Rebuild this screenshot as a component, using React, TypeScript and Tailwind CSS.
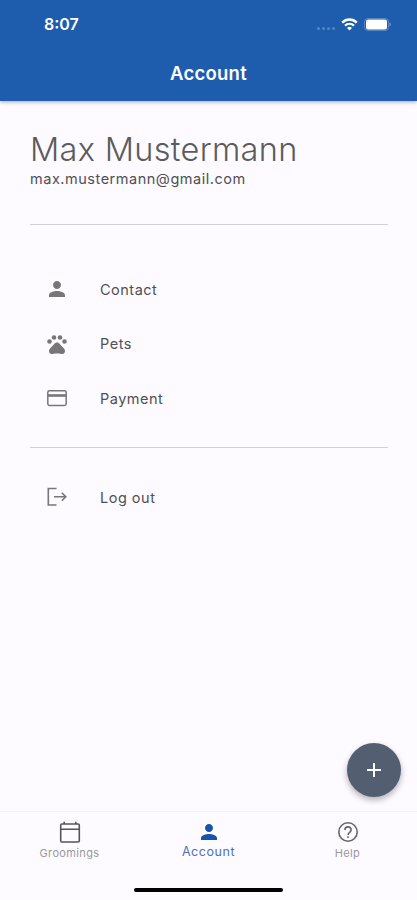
import type { ReactNode } from "react";

const PERSON =
  "M12 12c2.21 0 4-1.79 4-4s-1.79-4-4-4-4 1.79-4 4 1.79 4 4 4zm0 2c-2.67 0-8 1.34-8 4v2h16v-2c0-2.66-5.33-4-8-4z";

function Icon({ children }: { children: ReactNode }) {
  return (
    <svg viewBox="0 0 24 24" className="h-6 w-6 shrink-0" fill="currentColor">
      {children}
    </svg>
  );
}

function PawIcon() {
  return (
    <Icon>
      <circle cx="4.5" cy="9.5" r="2.3" />
      <circle cx="9" cy="5.5" r="2.3" />
      <circle cx="15" cy="5.5" r="2.3" />
      <circle cx="19.5" cy="9.5" r="2.3" />
      <path d="M17.34 14.86c-.87-1.02-1.6-1.89-2.48-2.91-.46-.54-1.05-1.08-1.75-1.32-.11-.04-.22-.07-.33-.09-.25-.04-.52-.04-.78-.04s-.53 0-.79.05c-.11.02-.22.05-.33.09-.7.24-1.28.78-1.75 1.32-.87 1.02-1.6 1.89-2.48 2.91-1.31 1.31-2.92 2.76-2.62 4.79.29 1.02 1.02 2.03 2.33 2.32.73.15 3.06-.44 5.54-.44h.18c2.48 0 4.81.58 5.54.44 1.31-.29 2.04-1.31 2.33-2.32.31-2.04-1.3-3.49-2.61-4.8z" />
    </Icon>
  );
}

function Row({ icon, label }: { icon: ReactNode; label: string }) {
  return (
    <div className="flex h-[54.5px] items-center gap-[31px] pl-[15px] text-[#777777]">
      {icon}
      <span className="pt-px text-[14.5px] leading-5 tracking-[0.5px] text-[#505053]">{label}</span>
    </div>
  );
}

export default function App() {
  return (
    <div className="relative flex h-[900px] w-[417px] flex-col overflow-hidden bg-[#fdfbff] font-['Inter',sans-serif]">
      <header className="z-10 h-[100.5px] shrink-0 bg-[#1e5dae] text-white shadow-[0_1px_4px_rgba(0,0,0,0.35)]">
        <div className="flex h-12 items-center justify-between pr-[26px] pl-[44px]">
          <span className="text-[16px] leading-5 font-semibold">8:07</span>
          <div className="flex items-center">
            <div className="mt-2 mr-[6px] flex gap-[2px]">
              {[0, 1, 2, 3].map((n) => (
                <i key={n} className="h-[3px] w-[3px] rounded-full bg-white/25" />
              ))}
            </div>
            <svg viewBox="0 0 17 13" className="mr-[6px] h-[13px] w-[17px]" fill="none" stroke="white">
              <path d="M1.2 4.6a10.3 10.3 0 0 1 14.6 0" strokeWidth="2.5" />
              <path d="M4 7.6a6.4 6.4 0 0 1 9 0" strokeWidth="2.2" />
              <path d="M8.5 12.6 6 9.9a3.6 3.6 0 0 1 5 0z" fill="white" stroke="none" />
            </svg>
            <svg viewBox="0 0 27 13" className="h-[13px] w-[27px]">
              <rect x=".5" y=".5" width="24" height="12" rx="3.5" fill="none" stroke="white" strokeOpacity=".25" />
              <rect x="2" y="1.5" width="21" height="10" rx="2" fill="white" />
              <path d="M25.5 4.5v4c1.6-.6 1.6-3.4 0-4z" fill="white" fillOpacity=".45" />
            </svg>
          </div>
        </div>
        <h1 className="pt-[13px] text-center text-[18.5px] leading-6 font-semibold tracking-[0.25px]">Account</h1>
      </header>

      <main className="flex-1 pr-[29px] pl-[30px]">
        <h2 className="pt-[29.5px] text-[32.5px] leading-[39px] font-light tracking-[0.3px] text-[#5c5c5c]">Max Mustermann</h2>
        <p className="text-[14.5px] leading-5 tracking-[0.52px] text-[#505053]">max.mustermann@gmail.com</p>
        <div className="mt-[35px] border-t border-[#d2d0d4]" />
        <div className="pt-[37px]">
          <Row icon={<Icon><path d={PERSON} /></Icon>} label="Contact" />
          <Row icon={<PawIcon />} label="Pets" />
          <Row
            icon={
              <svg viewBox="0 0 24 24" className="h-6 w-6" fill="none" stroke="currentColor">
                <rect x="2.8" y="4.8" width="18.4" height="14.6" rx="1.6" strokeWidth="1.5" />
                <path d="M3 9.5h18" strokeWidth="2.6" />
              </svg>
            }
            label="Payment"
          />
        </div>
        <div className="mt-[21px] border-t border-[#d2d0d4]" />
        <div className="pt-[22.5px]">
          <Row
            icon={
              <svg viewBox="0 0 24 24" className="h-6 w-6" fill="none" stroke="currentColor" strokeWidth="1.6">
                <path d="M11.5 3.5H3.3V20h8.2M9 11.7h11.5M16.8 7.7l4 4-4 4" />
              </svg>
            }
            label="Log out"
          />
        </div>
      </main>

      <button className="absolute top-[743px] left-[347px] flex h-[54px] w-[54px] items-center justify-center rounded-full bg-[#535f70] text-white shadow-[0_3px_6px_rgba(0,0,0,0.3)]">
        <Icon>
          <path d="M19 13h-6v6h-2v-6H5v-2h6V5h2v6h6z" />
        </Icon>
      </button>

      <nav className="h-[89px] shrink-0 border-t border-[#f3f1f5]">
        <div className="grid h-[70px] grid-cols-3">
          <div className="flex flex-col items-center pt-2 text-[#555555]">
            <svg viewBox="0 0 24 24" className="h-6 w-6" fill="none" stroke="currentColor" strokeWidth="1.6">
              <path d="M4 4h16q1.3 0 1.3 1.3v15.4Q21.3 22 20 22H4q-1.3 0-1.3-1.3V5.3Q2.700 4 4 4zM3 9.2h18M6.2 1.7V4M17.8 1.7V4" />
            </svg>
            <span className="pt-px text-[11px] leading-4 tracking-[0.35px] text-[#9b999d]">Groomings</span>
          </div>
          <div className="flex flex-col items-center pt-2 text-[#1754aa]">
            <Icon><path d={PERSON} /></Icon>
            <span className="text-[12.5px] leading-4 tracking-[0.55px] text-[#4b73bb]">Account</span>
          </div>
          <div className="flex flex-col items-center pt-2 text-[#666666]">
            <svg viewBox="0 0 24 24" className="h-6 w-6" fill="none" stroke="currentColor" strokeWidth="1.6">
              <circle cx="12" cy="12" r="9.2" />
              <path d="M8.900 10a3.1 3.1 0 1 1 6.2 0c0 2.2-3.1 2.5-3.1 5M12 16.2V18" />
            </svg>
            <span className="pt-px text-[11px] leading-4 tracking-[0.35px] text-[#9b999d]">Help</span>
          </div>
        </div>
        <div className="mx-auto mt-[6px] h-[4px] w-[149px] rounded-full bg-black" />
      </nav>
    </div>
  );
}
